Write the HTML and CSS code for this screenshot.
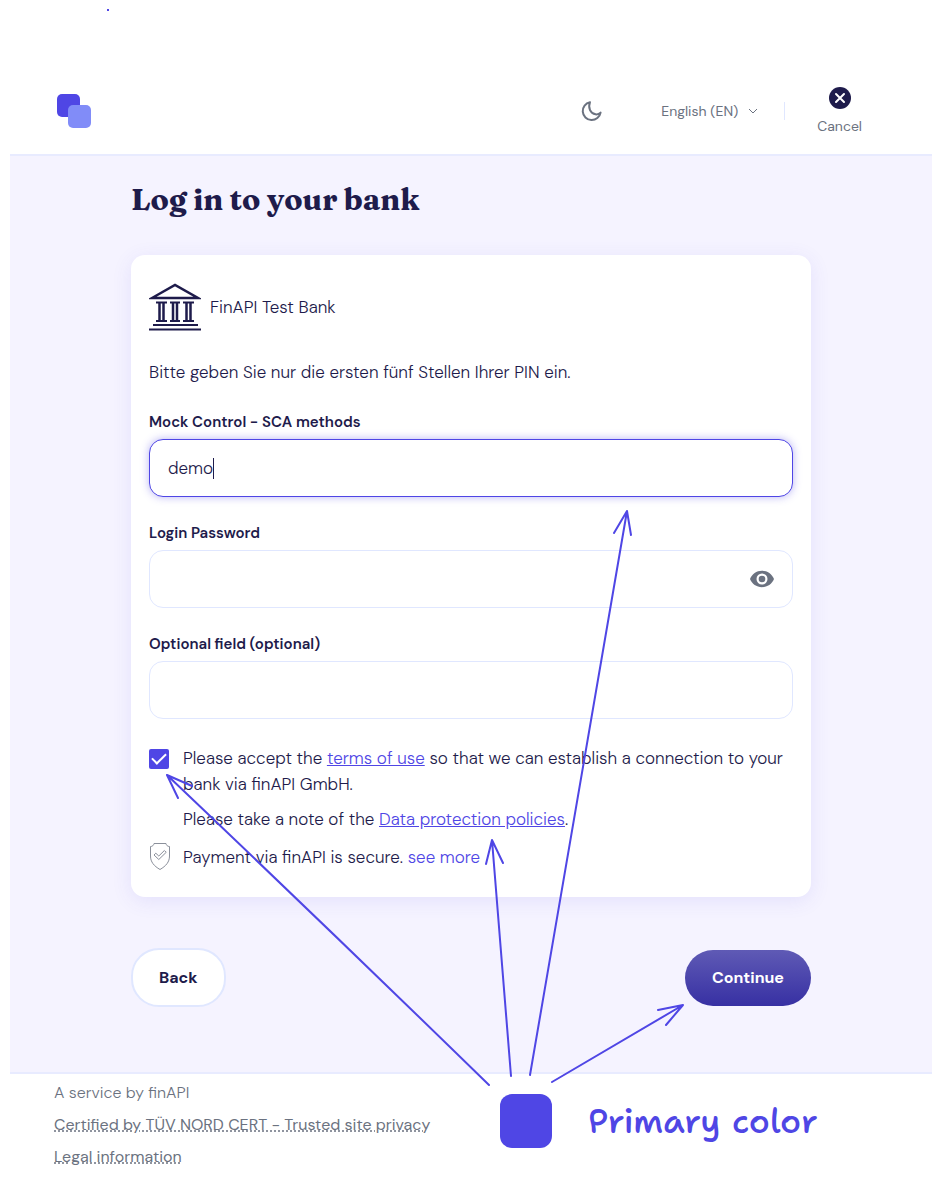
FILE: index.html
```html
<!DOCTYPE html>
<html lang="en">
<head>
  <meta charset="UTF-8">
  <meta name="viewport" content="width=device-width, initial-scale=1">
  <title>Log in to your bank</title>
  <link rel="stylesheet" href="styles.css">
</head>
<body>
  <div class="page">
    <header class="header">
      <a href="#" class="logo" aria-label="Home">
        <svg width="34" height="34" viewBox="0 0 34 34">
          <rect x="0" y="0" width="23" height="23" rx="5" fill="#4f46e5"/>
          <rect x="11" y="11" width="23" height="23" rx="5" fill="#818cf8"/>
        </svg>
      </a>
      <div class="header-tools">
        <button type="button" class="icon-btn" aria-label="Dark mode">
          <svg width="24" height="24" viewBox="0 0 24 24" fill="none" stroke="#6b7280" stroke-width="2" stroke-linejoin="round">
            <path d="M11 3.2a9 9 0 1 0 10.6 10.4c-1.500 1.500-3.300 2-5.100 1.700C11.500 14.500 8.700 9 11 3.200z"/>
          </svg>
        </button>
        <div class="language">
          <select aria-label="Language">
            <option>English (EN)</option>
            <option>Italiano (IT)</option>
          </select>
          <svg class="chevron" width="10" height="6" viewBox="0 0 10 6" fill="none" stroke="#6b7280">
            <path d="M1 1l4 4 4-4"/>
          </svg>
        </div>
        <button type="button" class="cancel">
          <svg width="22" height="22" viewBox="0 0 22 22">
            <circle cx="11" cy="11" r="11" fill="#1e1b4b"/>
            <path d="M7 7l8 8M15 7l-8 8" stroke="#fff" stroke-width="2" stroke-linecap="round"/>
          </svg>
          Cancel
        </button>
      </div>
    </header>

    <main class="main">
      <form class="content" onsubmit="return false;">
        <h1>Log in to your bank</h1>

        <div class="card">
          <div class="bank">
            <svg width="52" height="52" viewBox="0 0 52 52" fill="none" stroke="#1e1b4b" stroke-width="2">
              <path stroke-width="2.500" d="M3 17L26 4 49 17z"/>
              <path d="M7 21.500h11M21 21.500h10M34 21.500h11M7 40h11M21 40h10M34 40h11"/>
              <path stroke-width="2.500" d="M10.500 21v19M14.500 21v19M24 21v19M28 21v19M37.500 21v19M41.500 21v19"/>
              <path d="M4 44h45M0 48.500h52"/>
            </svg>
            <span>FinAPI Test Bank</span>
          </div>

          <p class="intro">Bitte geben Sie nur die ersten fünf Stellen Ihrer PIN ein.</p>

          <div class="field">
            <label for="sca">Mock Control - SCA methods</label>
            <div class="control">
              <input type="text" id="sca" class="active" value="demo">
              <span class="caret"></span>
            </div>
          </div>

          <div class="field">
            <label for="password">Login Password</label>
            <div class="control">
              <input type="password" id="password">
              <button type="button" class="eye" aria-label="Show password">
                <svg width="24" height="18" viewBox="0 0 24 18">
                  <path fill="#6b7280" fill-rule="evenodd" d="M12 .8C6.500.8 1.900 4.200 0 9c1.900 4.800 6.500 8.200 12 8.200S22.100 13.800 24 9C22.100 4.200 17.500.8 12 .8zm0 13.700a5.500 5.500 0 1 1 0-11 5.500 5.500 0 0 1 0 11z"/>
                  <circle cx="12" cy="9" r="3.300" fill="#6b7280"/>
                </svg>
              </button>
            </div>
          </div>

          <div class="field">
            <label for="optional">Optional field (optional)</label>
            <div class="control">
              <input type="text" id="optional">
            </div>
          </div>

          <div class="row terms">
            <input type="checkbox" id="terms" checked>
            <label for="terms">Please accept the <a href="#">terms of use</a> so that we can establish a connection to your bank via finAPI GmbH.</label>
          </div>
          <p class="note">Please take a note of the <a href="#">Data protection policies</a>.</p>
          <div class="row secure">
            <svg width="22" height="28" viewBox="0 0 22 28" fill="none" stroke="#8b909b" stroke-linejoin="round">
              <path d="M5 .500h12c.3 1.800 1.500 3 3.500 3V13c0 6-3.500 10-9.500 13.500C5 23 1.500 19 1.500 13V3.500c2 0 3.200-1.200 3.500-3z"/>
              <path d="M5 12l1.800-1.800 3 2.800L15.400 7.500l1.800 1.800-7.400 7.200z"/>
            </svg>
            <span>Payment via finAPI is secure. <a href="#">see more</a></span>
          </div>
        </div>

        <div class="actions">
          <button type="button" class="btn btn-back">Back</button>
          <button type="submit" class="btn btn-continue">Continue</button>
        </div>
      </form>
    </main>

    <footer class="footer">
      <p>A service by finAPI</p>
      <p><a href="#">Certified by TÜV NORD CERT - Trusted site privacy</a></p>
      <p><a href="#">Legal information</a></p>
    </footer>
  </div>

  <!-- annotations drawn over the form -->
  <svg class="arrows" viewBox="0 0 942 1190" preserveAspectRatio="xMidYMin" fill="none" stroke="#4f46e5" stroke-width="2" stroke-linecap="round" stroke-linejoin="round">
    <path d="M489 1085Q330 930 167 775M178 798L167 775 192 786"/>
    <path d="M511 1076Q502 960 492 840M486 864L492 840 503 863"/>
    <path d="M530 1075Q580 790 627 511M614 533L627 511 631 535"/>
    <path d="M552 1082L683 1005M658 1010L683 1005 666 1025"/>
    <rect x="107" y="9" width="2" height="2" fill="#4f46e5" stroke="none"/>
  </svg>
  <div class="legend">
    <span class="swatch"></span>
    <span>Primary color</span>
  </div>
</body>
</html>
```

FILE: styles.css
```css
* {
  box-sizing: border-box;
}
body {
  position: relative;
  margin: 0;
  padding: 0 10px;
  background: #fff;
  color: #1e1b4b;
  font-family: "DM Sans", "Open Sans", sans-serif;
  font-size: 17px;
  font-weight: 300;
  line-height: 26px;
}
h1, p {
  margin: 0;
}
a {
  color: #4f46e5;
}
button, input, select {
  font: inherit;
  color: inherit;
}
button {
  padding: 0;
  border: none;
  background: none;
  cursor: pointer;
}
svg {
  display: block;
}

/* header */
.header {
  display: flex;
  justify-content: space-between;
  align-items: center;
  height: 156px;
  padding: 68px 70px 0 47px;
  border-bottom: 2px solid #e8ebff;
}
.header-tools {
  display: flex;
  align-items: center;
  color: #6b7280;
  font-size: 14px;
  font-weight: 400;
}
.language {
  display: flex;
  align-items: center;
  gap: 9px;
  height: 18px;
  margin-left: 58px;
  padding-right: 26px;
  border-right: 1px solid #e0e7ff;
}
.language select {
  padding: 0;
  border: none;
  background: none;
  appearance: none;
}
.cancel {
  display: flex;
  flex-direction: column;
  align-items: center;
  gap: 4px;
  margin-left: 32px;
  padding-top: 3px;
}

/* main */
.main {
  padding: 25px 20px 65px;
  background: #f5f3ff;
  border-bottom: 2px solid #e8ebff;
}
.content {
  max-width: 680px;
  margin: 0 auto;
}
h1 {
  font-family: "Fraunces", "Liberation Serif", serif;
  font-size: 30px;
  font-weight: 700;
  line-height: 38px;
}
.card {
  margin-top: 36px;
  padding: 26px 18px 27px;
  border-radius: 14px;
  background: #fff;
  box-shadow: 0 4px 20px #4f46e51a;
}
.bank {
  display: flex;
  align-items: center;
  gap: 9px;
}
.intro {
  margin: 26px 0 24px;
}
.field {
  margin-top: 23px;
}
.field label {
  display: block;
  font-size: 15px;
  font-weight: 600;
}
.control {
  position: relative;
  margin-top: 4px;
}
.control input {
  display: block;
  width: 100%;
  height: 58px;
  padding: 0 18px;
  border: 1px solid #e0e7ff;
  border-radius: 14px;
  background: #fff;
  outline: none;
}
.control input.active {
  border-color: #4f46e5;
  box-shadow: 0 0 8px #4f46e566;
}
.caret {
  position: absolute;
  top: 19px;
  left: 64px;
  width: 1px;
  height: 21px;
  background: #1e1b4b;
}
.eye {
  position: absolute;
  top: 20px;
  right: 19px;
}
.row {
  display: flex;
}
.terms {
  gap: 14px;
  margin-top: 26px;
}
.terms input {
  flex: none;
  position: relative;
  width: 20px;
  height: 20px;
  margin: 4px 0 0;
  border-radius: 2px;
  background: #4f46e5;
  appearance: none;
}
.terms input:checked::after {
  content: "";
  box-sizing: border-box;
  position: absolute;
  top: 4px;
  left: 3px;
  width: 14px;
  height: 8px;
  border: solid #fff;
  border-width: 0 0 2px 2px;
  transform: rotate(-45deg);
}
.note {
  margin: 9px 0 12px 34px;
}
.secure {
  align-items: center;
  gap: 12px;
  height: 26px;
}
.secure a {
  text-decoration: none;
}
.actions {
  display: flex;
  justify-content: space-between;
  align-items: center;
  margin-top: 51px;
}
.btn {
  height: 56px;
  padding: 0 27px;
  border-radius: 28px;
  font-size: 16px;
  font-weight: 700;
}
.btn-back {
  height: 59px;
  padding: 0 26px;
  border: 2px solid #e0e7ff;
  background: #fff;
}
.btn-continue {
  background: linear-gradient(#5f5ab5, #3730a3);
  color: #fff;
}

/* footer */
.footer {
  display: flex;
  flex-direction: column;
  gap: 6px;
  padding: 6px 44px 20px;
  color: #6b7280;
  font-size: 16px;
}
.footer a {
  color: #6b7280;
  font-weight: 400;
  text-decoration: underline dotted;
}

/* annotations */
.arrows {
  position: absolute;
  top: 0;
  left: 0;
  width: 100%;
  height: 1190px;
  pointer-events: none;
}
.legend {
  position: absolute;
  top: 1094px;
  left: calc(50% + 29px);
  display: flex;
  align-items: center;
  gap: 36px;
  color: #4f46e5;
  font-family: "Excalifont", "Shantell Sans", "Comic Neue", cursive;
  font-size: 34px;
  font-weight: 500;
  white-space: nowrap;
}
.swatch {
  width: 52px;
  height: 54px;
  border-radius: 12px;
  background: #4f46e5;
}
```
